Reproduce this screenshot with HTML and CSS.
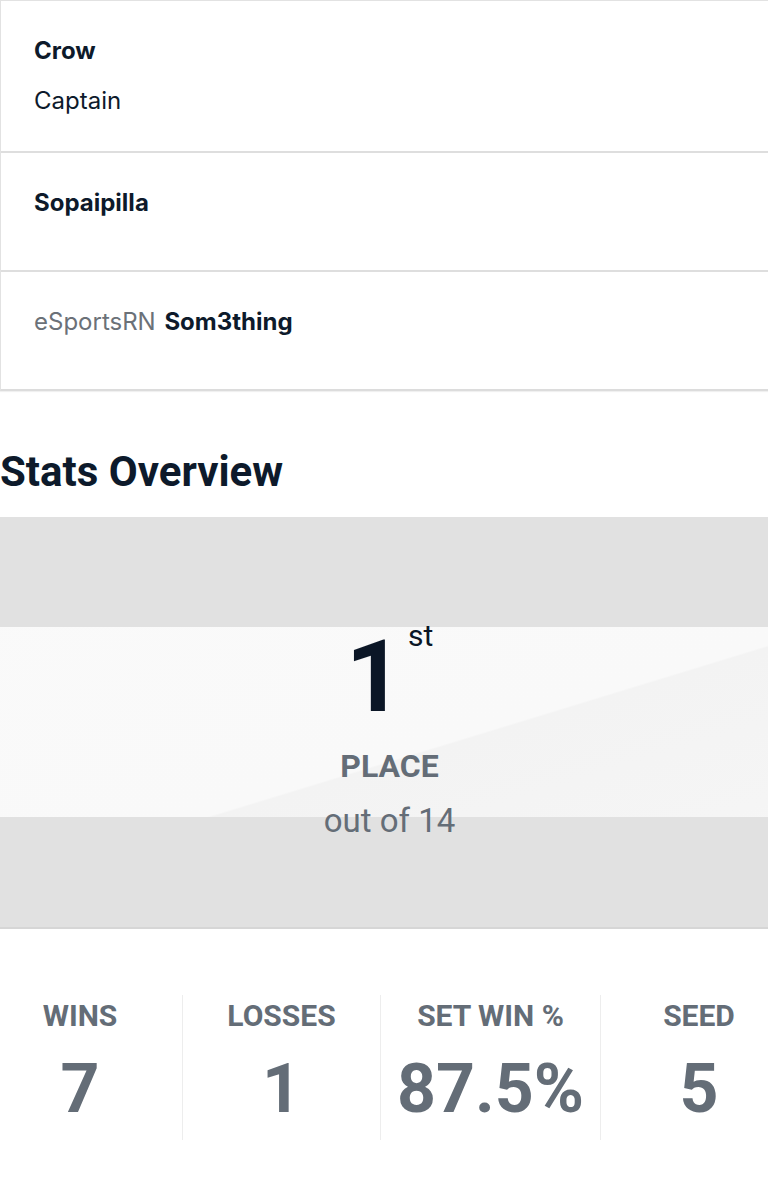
FILE: index.html
```html
<!DOCTYPE html>
<html lang="en">
<head>
<meta charset="utf-8">
<title>Team</title>
<link rel="stylesheet" href="styles.css">
</head>
<body>
<div class="page">
  <div class="roster">
    <div class="roster-row">
      <div class="player-name">Crow</div>
      <div class="player-role">Captain</div>
    </div>
    <div class="roster-row">
      <div class="player-name">Sopaipilla</div>
    </div>
    <div class="roster-row">
      <div class="player-name"><span class="player-prefix">eSportsRN</span> Som3thing</div>
    </div>
  </div>

  <h2 class="section-title">Stats Overview</h2>

  <div class="placement">
    <div class="placement-inner">
      <div class="place-rank"><span class="rank-num">1</span><span class="rank-suffix">st</span></div>
      <div class="place-label">PLACE</div>
      <div class="place-total">out of 14</div>
    </div>
  </div>

  <div class="stats">
    <div class="stat stat-first">
      <div class="stat-label">WINS</div>
      <div class="stat-value">7</div>
    </div>
    <div class="stat">
      <div class="stat-label">LOSSES</div>
      <div class="stat-value">1</div>
    </div>
    <div class="stat">
      <div class="stat-label">SET WIN %</div>
      <div class="stat-value">87.5%</div>
    </div>
    <div class="stat stat-last">
      <div class="stat-label">SEED</div>
      <div class="stat-value">5</div>
    </div>
  </div>
</div>
</body>
</html>
```

FILE: styles.css
```css
html, body {
  margin: 0;
  padding: 0;
  overflow-x: hidden;
  background: #ffffff;
}

.page {
  width: 779px;
  font-family: Inter, "Noto Sans", sans-serif;
  color: #0d1a2b;
}

.roster {
  border-top: 1px solid #e2e2e2;
  border-left: 1px solid #e2e2e2;
  border-bottom: 2px solid #dcdcdc;
  box-shadow: 0 1px 1px rgba(0,0,0,0.06);
}

.roster-row {
  padding: 35px 33px;
  min-height: 47px;
  border-bottom: 2px solid #dedede;
}

.roster-row:last-child {
  border-bottom: none;
}

.player-name {
  font-size: 24px;
  line-height: 30px;
  font-weight: 700;
}

.player-prefix {
  font-weight: 400;
  color: #6b7178;
  margin-right: 3px;
}

.player-role {
  margin-top: 20px;
  font-size: 24px;
  line-height: 30px;
  font-weight: 400;
}

.section-title {
  margin: 55px 0 19px;
  font-family: Roboto, "Liberation Sans", sans-serif;
  font-size: 42px;
  line-height: 52px;
  font-weight: 700;
  color: #0d1a2b;
}

.placement {
  height: 410px;
  border-bottom: 2px solid #d6d6d6;
  background:
    linear-gradient(to bottom, #e1e1e1 0, #e1e1e1 110px, transparent 110px, transparent 300px, #e1e1e1 300px),
    linear-gradient(163deg, #fafafa 0%, #f9f9f9 56%, #f3f3f3 56.3%, #f5f5f5 80%, #f8f8f8 100%);
  display: flex;
  align-items: center;
  justify-content: center;
  font-family: Roboto, "Liberation Sans", sans-serif;
}

.placement-inner {
  display: flex;
  flex-direction: column;
  align-items: center;
  padding-top: 22px;
}

.place-rank {
  display: flex;
  align-items: flex-start;
}

.rank-num {
  font-size: 100px;
  line-height: 100px;
  font-weight: 700;
  color: #0b1626;
}

.rank-suffix {
  font-size: 30px;
  line-height: 30px;
  font-weight: 400;
  color: #0b1626;
  margin-left: 5px;
  margin-top: -6px;
}

.place-label {
  margin-top: 20px;
  font-size: 32px;
  line-height: 38px;
  font-weight: 700;
  color: #646d77;
}

.place-total {
  margin-top: 17px;
  font-size: 33px;
  line-height: 38px;
  font-weight: 400;
  color: #646d77;
}

.stats {
  margin-top: 66px;
  display: grid;
  grid-template-columns: 182px 198px 220px 1fr;
  font-family: Roboto, "Liberation Sans", sans-serif;
  color: #646d77;
}

.stat {
  padding: 3px 0 16px;
  text-align: center;
  border-left: 1px solid #ededed;
}

.stat-first {
  border-left: none;
  padding-right: 22px;
}

.stat-last {
  padding-left: 18px;
}

.stat-label {
  font-size: 30px;
  line-height: 36px;
  font-weight: 700;
}

.stat-value {
  margin-top: 20px;
  font-size: 68px;
  line-height: 70px;
  font-weight: 700;
}
```
